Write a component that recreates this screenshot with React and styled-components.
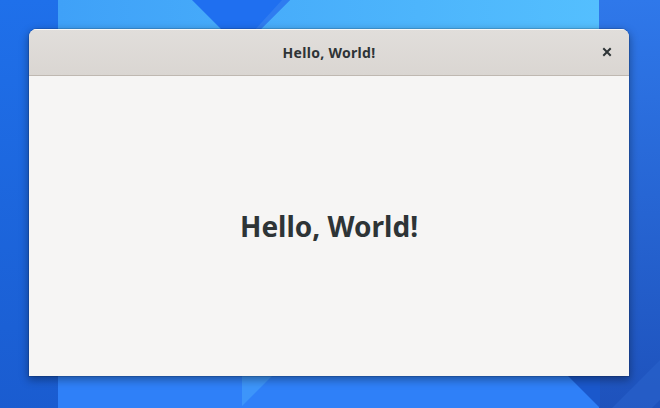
import React from "react";
import styled, { createGlobalStyle } from "styled-components";

const Global = createGlobalStyle`
  html, body { margin: 0; padding: 0; width: 660px; height: 408px; overflow: hidden; }
  body { font-family: "Noto Sans", "Open Sans", sans-serif; }
`;

const Desktop = styled.div`
  position: relative;
  width: 660px;
  height: 408px;
  overflow: hidden;
  background: #2f80f8;
  padding: 29px 0 0 29px;
  box-sizing: border-box;
`;

const Wallpaper = styled.svg`
  position: absolute;
  inset: 0;
  width: 660px;
  height: 408px;
  z-index: 0;
`;

const Window = styled.div`
  position: relative;
  z-index: 1;
  width: 600px;
  height: 347px;
  display: flex;
  flex-direction: column;
  border-radius: 8px 8px 0 0;
  overflow: hidden;
  background: #f6f5f4;
  box-shadow: 0 3px 9px 1px rgba(0, 0, 0, 0.35), 0 0 0 1px rgba(0, 0, 0, 0.12);
`;

const HeaderBar = styled.div`
  height: 46px;
  flex: 0 0 auto;
  display: grid;
  grid-template-columns: 1fr auto 1fr;
  align-items: center;
  background: linear-gradient(#e1dedb, #dad6d2);
  border-bottom: 1px solid #bfb8b1;
  box-shadow: inset 0 1px rgba(255, 255, 255, 0.8);
  padding: 0 6px;
`;

const Title = styled.div`
  grid-column: 2;
  font-weight: 700;
  font-size: 14px;
  color: #2e3436;
  letter-spacing: 0.3px;
`;

const CloseButton = styled.button`
  grid-column: 3;
  justify-self: end;
  width: 34px;
  height: 34px;
  display: flex;
  align-items: center;
  justify-content: center;
  border: none;
  background: transparent;
  padding: 0;
  margin-right: -1px;
`;

const Content = styled.div`
  flex: 1;
  display: flex;
  align-items: center;
  justify-content: center;
`;

const Heading = styled.h1`
  margin: 0;
  font-family: "Noto Sans", sans-serif;
  font-weight: 700;
  font-size: 28px;
  color: #2e3436;
  letter-spacing: 0px;
`;

export default function App() {
  return (
    <>
      <Global />
      <Desktop>
        <Wallpaper viewBox="0 0 660 408" aria-hidden="true">
          <defs>
            <linearGradient id="topLight" x1="0" x2="1" y1="0" y2="0">
              <stop offset="0" stopColor="#3fa1f8" />
              <stop offset="1" stopColor="#54bffe" />
            </linearGradient>
            <linearGradient id="leftStrip" x1="0" x2="0" y1="0" y2="1">
              <stop offset="0" stopColor="#1f70ea" />
              <stop offset="1" stopColor="#1a5cd0" />
            </linearGradient>
            <linearGradient id="rightStrip" x1="0" x2="0" y1="0" y2="1">
              <stop offset="0" stopColor="#2f78ea" />
              <stop offset="1" stopColor="#1e52bc" />
            </linearGradient>
          </defs>
          <rect x="0" y="0" width="660" height="408" fill="#2f80f8" />
          <rect x="58" y="0" width="541" height="60" fill="url(#topLight)" />
          <polygon points="192,0 290,0 241,49" fill="#1f6ff0" />
          <polygon points="282,0 290,0 245,45 241,45" fill="#3a86f0" opacity="0.6" />
          <rect x="0" y="0" width="58" height="408" fill="url(#leftStrip)" />
          <rect x="599" y="0" width="61" height="408" fill="url(#rightStrip)" />
          <polygon points="242,376 272,376 242,406" fill="#3d95fa" />
          <polygon points="560,368 600,368 600,408" fill="#1a58cc" />
          <polygon points="660,360 660,400 620,440 600,440 600,420" fill="#2a62cc" opacity="0.6" />
        </Wallpaper>
        <Window>
          <HeaderBar>
            <Title>Hello, World!</Title>
            <CloseButton aria-label="Close">
              <svg width="16" height="16" viewBox="0 0 16 16">
                <path d="M5 5 L11 11 M11 5 L5 11" stroke="#2e3436" strokeWidth="2" strokeLinecap="square" />
              </svg>
            </CloseButton>
          </HeaderBar>
          <Content>
            <Heading>Hello, World!</Heading>
          </Content>
        </Window>
      </Desktop>
    </>
  );
}
